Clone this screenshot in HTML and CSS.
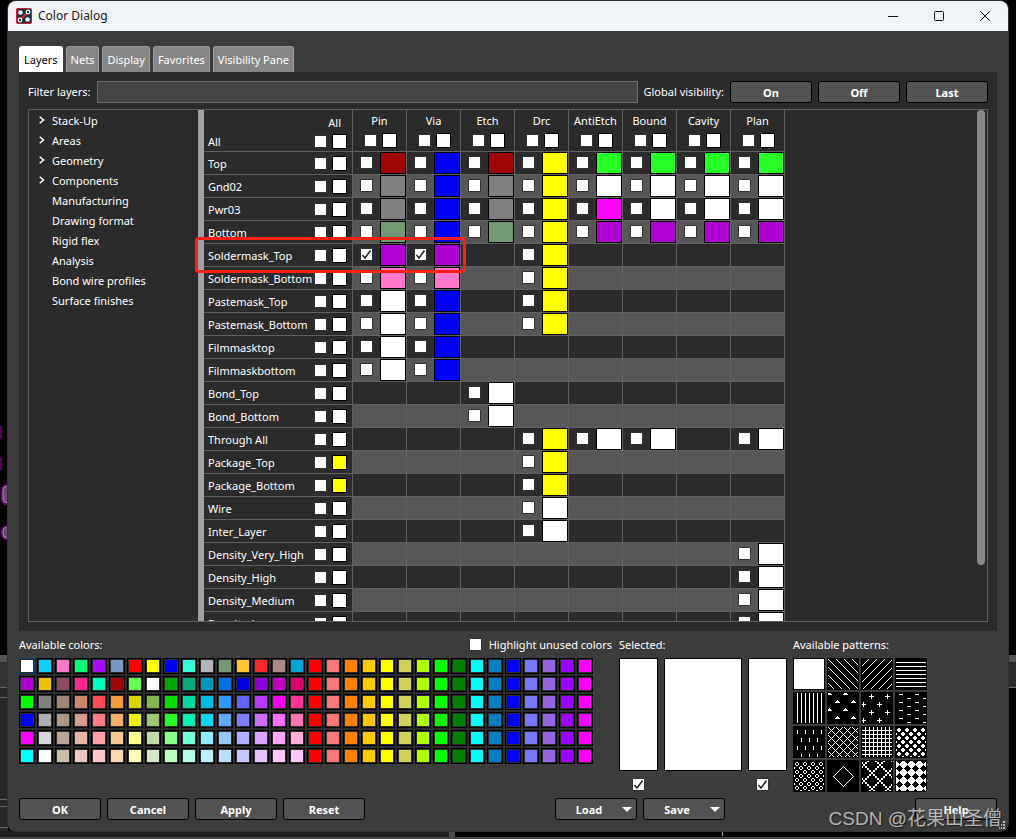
FILE: index.html
```html
<!DOCTYPE html>
<html lang="en">
<head>
    <meta charset="UTF-8">
    <meta name="viewport" content="width=device-width, initial-scale=1.0">
    <title>Color Dialog</title>
    <link rel="stylesheet" href="styles.css">
</head>
<body>
    <!-- parts of the application behind the dialog -->
    <svg class="backdrop backdrop-left" width="8" height="839" aria-hidden="true" shape-rendering="crispEdges">
        <path d="M0 426h2v13h-2zM0 457h2v13h-2z" fill="#5a0060"/>
        <g shape-rendering="auto" stroke="#a58aa8" fill="#6a4a6e">
            <rect x="2" y="485" width="14" height="19" rx="5" stroke="#5a0060" stroke-width="3"/>
            <rect x="3" y="486" width="14" height="17" rx="4"/>
            <rect x="2" y="526" width="14" height="13" rx="5" stroke="#5a0060" stroke-width="3"/>
            <rect x="3" y="527" width="14" height="11" rx="4"/>
        </g>
        <rect y="655" width="8" height="184" fill="#282828"/>
        <rect y="655" width="8" height="7" fill="#555"/>
        <rect y="662" width="8" height="25" fill="#333"/>
        <path d="M0 687.5h8M0 697.5h8M0 799.5h8M0 806.5h8M0 827.5h8" stroke="#666"/>
    </svg>
    <svg class="backdrop backdrop-right" width="8" height="839" aria-hidden="true" shape-rendering="crispEdges">
        <rect y="655" width="8" height="7" fill="#555"/>
        <rect y="662" width="8" height="25" fill="#2c2c2c"/>
        <path d="M0 687.5h8" stroke="#666"/>
    </svg>
    <svg class="backdrop backdrop-bottom" width="1016" height="8" aria-hidden="true" shape-rendering="crispEdges">
        <rect width="449" height="8" fill="#222"/>
        <rect x="449" width="6" height="8" fill="#4a4a4a"/>
        <rect x="685" width="199" height="1" fill="#2e8b57"/>
        <rect x="722" width="1" height="5" fill="#aaa"/>
        <rect y="6" width="1016" height="2" fill="#444"/>
    </svg>

    <main class="window">
        <header class="titlebar">
            <svg class="app-icon" width="16" height="16" viewBox="0 0 16 16" aria-hidden="true">
                <rect x="0.5" y="0.5" width="15" height="15" rx="1" fill="#12303a" stroke="#c8203c"/>
                <path d="M5 11l6-6" stroke="#d8203c" stroke-width="2"/>
                <path d="M1 1h2M1 3V1M15 13v2h-2" stroke="#d8203c"/>
                <circle cx="4.5" cy="4.5" r="2.3" fill="#fff"/>
                <circle cx="11.5" cy="11.5" r="2.3" fill="#fff"/>
                <circle cx="12" cy="4" r="1.8" fill="none" stroke="#fff" stroke-width="1.2"/>
                <circle cx="4" cy="12" r="1.8" fill="none" stroke="#fff" stroke-width="1.2"/>
            </svg>
            <h1>Color Dialog</h1>
            <div class="window-controls">
                <button type="button" aria-label="Minimize">
                    <svg width="12" height="12" viewBox="0 0 12 12"><path d="M1 6.5h10"/></svg>
                </button>
                <button type="button" aria-label="Maximize">
                    <svg width="12" height="12" viewBox="0 0 12 12"><rect x="1.5" y="1.5" width="9" height="9" rx="1"/></svg>
                </button>
                <button type="button" aria-label="Close">
                    <svg width="12" height="12" viewBox="0 0 12 12"><path d="M1 1l10 10M11 1L1 11"/></svg>
                </button>
            </div>
        </header>

        <div class="content">
            <div class="tabs" role="tablist">
                <button type="button" class="tab active" role="tab" aria-selected="true">Layers</button>
                <button type="button" class="tab" role="tab">Nets</button>
                <button type="button" class="tab" role="tab">Display</button>
                <button type="button" class="tab" role="tab">Favorites</button>
                <button type="button" class="tab" role="tab">Visibility Pane</button>
            </div>

            <section class="panel">
                <div class="filter-row">
                    <label for="filter">Filter layers:</label>
                    <input type="text" id="filter" class="filter-input">
                    <span>Global visibility:</span>
                    <div class="button-group">
                        <button type="button" class="btn">On</button>
                        <button type="button" class="btn">Off</button>
                        <button type="button" class="btn">Last</button>
                    </div>
                </div>

                <div class="split">
                    <ul class="tree">
                        <li class="parent">Stack-Up</li>
                        <li class="parent">Areas</li>
                        <li class="parent">Geometry</li>
                        <li class="parent">Components</li>
                        <li>Manufacturing</li>
                        <li>Drawing format</li>
                        <li>Rigid flex</li>
                        <li>Analysis</li>
                        <li>Bond wire profiles</li>
                        <li>Surface finishes</li>
                    </ul>
                    <div class="splitter"></div>
                    <div class="layers">
                        <table class="layer-table">
                            <colgroup id="cols"><col class="col-name"></colgroup>
                            <thead><tr id="head"></tr></thead>
                            <tbody id="rows"></tbody>
                        </table>
                    </div>
                    <div class="scrollbar"><div class="thumb"></div></div>
                    <div class="callout"></div>
                </div>
            </section>

            <div class="palette">
                <section class="colors">
                    <div class="palette-head">
                        <span>Available colors:</span>
                        <label class="check-label"><input type="checkbox" class="check"> Highlight unused colors</label>
                    </div>
                    <div class="color-grid" id="colors"></div>
                </section>
                <section class="selected">
                    <div class="palette-head">Selected:</div>
                    <div class="selected-boxes">
                        <div class="selected-col">
                            <div class="preview"></div>
                            <input type="checkbox" class="check" aria-label="Use selected color" checked>
                        </div>
                        <div class="preview preview-wide"></div>
                        <div class="selected-col selected-pattern">
                            <div class="preview"></div>
                            <input type="checkbox" class="check" aria-label="Use selected pattern" checked>
                        </div>
                    </div>
                </section>
                <section class="patterns">
                    <div class="palette-head">Available patterns:</div>
                    <div class="pattern-grid" id="patterns"></div>
                </section>
            </div>

            <footer class="actions">
                <div class="button-group">
                    <button type="button" class="btn">OK</button>
                    <button type="button" class="btn">Cancel</button>
                    <button type="button" class="btn">Apply</button>
                    <button type="button" class="btn">Reset</button>
                </div>
                <div class="button-group">
                    <button type="button" class="btn btn-menu"><span>Load</span><svg width="10" height="5" viewBox="0 0 10 5"><path d="M0 0h10L5 5z" fill="#fff"/></svg></button>
                    <button type="button" class="btn btn-menu"><span>Save</span><svg width="10" height="5" viewBox="0 0 10 5"><path d="M0 0h10L5 5z" fill="#fff"/></svg></button>
                </div>
                <button type="button" class="btn">Help</button>
            </footer>
        </div>

        <svg class="grip" width="6" height="8" viewBox="0 0 6 8" shape-rendering="crispEdges" aria-hidden="true">
            <path d="M4 0h2v2h-2zM2 3h1v2h-1zM4 3h2v2h-2zM0 6h1v2h-1zM2 6h1v2h-1zM4 6h2v2h-2z" fill="#bbb"/>
        </svg>
        <div class="watermark">CSDN @花果山圣僧</div>
    </main>

    <script src="script.js"></script>
</body>
</html>
```

FILE: styles.css
```css
* {
    box-sizing: border-box;
}

body {
    margin: 0;
    height: 100vh;
    padding: 1px 8px 8px;
    background-color: #000;
    color: #fff;
    font-family: "Noto Sans", "Open Sans", sans-serif;
    font-size: 11px;
    line-height: 16px;
    overflow: hidden;
}

button,
input {
    font: inherit;
    color: inherit;
    margin: 0;
}

.backdrop {
    position: absolute;
    top: 0;
}

.backdrop-left {
    left: 0;
}

.backdrop-right {
    right: 0;
}

.backdrop-bottom {
    top: auto;
    bottom: 0;
    left: 0;
}

.window {
    position: relative;
    display: flex;
    flex-direction: column;
    height: 100%;
    border-radius: 8px;
    background-color: #3c3c3c;
    box-shadow: 0 0 0 1px #333;
    overflow: hidden;
}

/* Title bar */
.titlebar {
    display: flex;
    align-items: center;
    height: 30px;
    padding-left: 8px;
    background-color: #f0f3f8;
    color: #1a1a1a;
}

.titlebar h1 {
    flex: 1;
    margin: 0 0 0 6px;
    font-size: 12px;
    font-weight: normal;
}

.window-controls {
    display: flex;
}

.window-controls button {
    display: flex;
    align-items: center;
    justify-content: center;
    width: 46px;
    height: 30px;
    padding: 0;
    border: none;
    background: none;
}

.window-controls svg {
    fill: none;
    stroke: #111;
}

.content {
    display: flex;
    flex: 1;
    flex-direction: column;
    min-height: 0;
    padding: 15px 11px 11px;
}

/* Tabs */
.tabs {
    display: flex;
    gap: 3px;
}

.tab {
    height: 26px;
    padding: 0 4px;
    border: 1px solid #999;
    border-bottom: none;
    border-radius: 3px 3px 0 0;
    background-color: #868686;
}

.tab.active {
    border-color: #fff;
    background-color: #fff;
    color: #000;
}

/* Layers panel */
.panel {
    display: flex;
    flex: 1;
    flex-direction: column;
    gap: 6px;
    min-height: 0;
    padding: 9px;
    background-color: #2b2b2b;
}

.filter-row {
    display: flex;
    align-items: center;
    gap: 6px;
}

.filter-input {
    flex: 1;
    height: 22px;
    border: 1px solid #6e6e6e;
    background-color: #454545;
}

.button-group {
    display: flex;
    gap: 6px;
}

.btn {
    width: 82px;
    height: 22px;
    padding: 1px 0 0;
    border: 1px solid #000;
    border-radius: 3px;
    background-color: #525252;
    font-weight: bold;
}

.btn-menu {
    display: flex;
    align-items: center;
    padding-right: 4px;
}

.btn-menu span {
    flex: 1;
}

.split {
    position: relative;
    display: flex;
    flex: 1;
    min-height: 0;
    border: 1px solid #5f5f5f;
}

.tree {
    width: 169px;
    margin: 0;
    padding: 1px 0 0 23px;
    list-style: none;
    line-height: 20px;
}

.parent {
    background: url("data:image/svg+xml,%3Csvg xmlns='http://www.w3.org/2000/svg' width='6' height='8' viewBox='0 0 6 8'%3E%3Cpath d='M.7 .8L4.500 4L.7 7.200' fill='none' stroke='%23fff' stroke-width='1.500'/%3E%3C/svg%3E") 10px 5px no-repeat;
    margin-left: -23px;
    padding-left: 23px;
}

.splitter {
    width: 6px;
    background-color: #a0a0a0;
}

.layers {
    flex: 1;
    overflow: hidden;
}

.layer-table {
    width: 581px;
    table-layout: fixed;
    border-collapse: separate;
    border-spacing: 0;
}

.col-name {
    width: 149px;
}

.layer-table th,
.layer-table td {
    padding: 0;
    border-right: 1px solid #606060;
    border-bottom: 1px solid #606060;
    font-weight: normal;
    text-align: left;
    vertical-align: top;
}

.layer-table tbody tr:nth-child(even) td {
    background-color: #575757;
}

.layer-name {
    display: flex;
    align-items: center;
    height: 22px;
    padding: 0 5px 0 4px;
}

.layer-name span {
    flex: 1;
    padding-top: 1px;
}

.layer-name .swatch,
.head-checks .swatch {
    margin-left: 5px;
}

.name-head {
    height: 41px;
    padding: 5px 5px 0 4px;
}

.name-head-title {
    padding-right: 6px;
    text-align: right;
}

.name-head .layer-name {
    height: 20px;
    padding: 0;
}

.col-head {
    height: 41px;
    padding-top: 3px;
    text-align: center;
}

.head-checks {
    display: flex;
    align-items: center;
    justify-content: center;
    margin-top: 4px;
    padding-left: 2px;
}

.cell {
    display: flex;
    height: 22px;
    padding-left: 7px;
}

.cell .check {
    margin: 4px 7px 0 0;
}

.check {
    display: block;
    flex: none;
    width: 13px;
    height: 13px;
    border: 1px solid #303030;
    border-radius: 1px;
    appearance: none;
    background-color: #fff;
}

.check:checked {
    background-image: url("data:image/svg+xml,%3Csvg xmlns='http://www.w3.org/2000/svg' viewBox='0 0 11 11'%3E%3Cpath d='M1.5 6l2.5 3L9.500 1.500' fill='none' stroke='%23222' stroke-width='1.500'/%3E%3C/svg%3E");
}

.swatch {
    flex: none;
    width: 15px;
    height: 15px;
    padding: 0;
    border: 1px solid #000;
    background-color: #fff;
}

.cell .swatch {
    width: 26px;
    height: 22px;
}

.scrollbar {
    width: 10px;
}

.thumb {
    width: 8px;
    height: 89%;
    border-radius: 4px;
    background-color: #888;
}

/* red frame round the soldermask row */
.callout {
    position: absolute;
    top: 127px;
    left: 166px;
    width: 271px;
    height: 36px;
    border: 3px solid #ff2015;
    border-radius: 4px;
}

/* Palette */
.palette {
    display: flex;
}

.colors {
    width: 593px;
    margin-right: 7px;
}

.selected {
    margin-right: 6px;
}

.palette-head {
    display: flex;
    align-items: center;
    justify-content: space-between;
    height: 27px;
}

.check-label {
    display: flex;
    align-items: center;
    gap: 7px;
}

.color-grid {
    display: grid;
    grid-template-columns: repeat(32, 16px);
    gap: 2px;
    width: 574px;
    background-color: #2b2b2b;
}

.color {
    display: flex;
    width: 16px;
    height: 16px;
    padding: 1px;
    border: 1px solid #000;
    background-color: #2b2b2b;
}

.color span {
    flex: 1;
    align-self: stretch;
}

.color:first-child {
    border-color: #0d3f75;
}

.selected-boxes {
    display: flex;
    gap: 6px;
}

.selected-col {
    display: flex;
    flex-direction: column;
    align-items: center;
    gap: 7px;
}

.selected-pattern {
    align-items: flex-start;
}

.selected-pattern .check {
    margin-left: 8px;
}

.preview {
    width: 39px;
    height: 113px;
    border: 1px solid #000;
    background-color: #fff;
}

.preview-wide {
    width: 78px;
}

.pattern-grid {
    display: grid;
    grid-template-columns: repeat(4, 32px);
    gap: 2px;
}

.pattern {
    width: 32px;
    height: 32px;
    padding: 0;
    border: none;
    background-color: #000;
}

.pattern svg {
    display: block;
}

.actions {
    display: flex;
    justify-content: space-between;
    margin-top: 6px;
}

.grip {
    position: absolute;
    right: 3px;
    bottom: 2px;
}

.watermark {
    position: absolute;
    right: 6px;
    bottom: 0;
    color: rgba(205, 205, 205, 0.85);
    font-family: "Liberation Sans", "Noto Sans CJK SC", sans-serif;
    font-size: 19px;
    line-height: 24px;
    text-shadow: 1px 1px 1px rgba(0, 0, 0, 0.5);
}
```

FILE: script.js
```javascript
const columns = ['Pin', 'Via', 'Etch', 'Drc', 'AntiEtch', 'Bound', 'Cavity', 'Plan'];

const W = '#ffffff', Y = '#ffff00', B = '#0000ff', R = '#a00505', G = '#808080';
const L = '#28ff28', P = '#ae00d0', S = '#749774', K = '#ff77c8', M = '#ff00ff';

// name, one color per column (0 = no cell)
const layers = [
    ['Top', [R, B, R, Y, L, L, L, L]],
    ['Gnd02', [G, B, G, Y, W, W, W, W]],
    ['Pwr03', [G, B, G, Y, M, W, W, W]],
    ['Bottom', [S, B, S, Y, P, P, P, P]],
    ['Soldermask_Top', [P, P, 0, Y, 0, 0, 0, 0]],
    ['Soldermask_Bottom', [K, K, 0, Y, 0, 0, 0, 0]],
    ['Pastemask_Top', [W, B, 0, Y, 0, 0, 0, 0]],
    ['Pastemask_Bottom', [W, B, 0, Y, 0, 0, 0, 0]],
    ['Filmmasktop', [W, B, 0, 0, 0, 0, 0, 0]],
    ['Filmmaskbottom', [W, B, 0, 0, 0, 0, 0, 0]],
    ['Bond_Top', [0, 0, W, 0, 0, 0, 0, 0]],
    ['Bond_Bottom', [0, 0, W, 0, 0, 0, 0, 0]],
    ['Through All', [0, 0, 0, Y, W, W, 0, W]],
    ['Package_Top', [0, 0, 0, Y, 0, 0, 0, 0], Y],
    ['Package_Bottom', [0, 0, 0, Y, 0, 0, 0, 0], Y],
    ['Wire', [0, 0, 0, W, 0, 0, 0, 0]],
    ['Inter_Layer', [0, 0, 0, W, 0, 0, 0, 0]],
    ['Density_Very_High', [0, 0, 0, 0, 0, 0, 0, W]],
    ['Density_High', [0, 0, 0, 0, 0, 0, 0, W]],
    ['Density_Medium', [0, 0, 0, 0, 0, 0, 0, W]],
    ['Density_Low', [0, 0, 0, 0, 0, 0, 0, W]]
];

function check(label, on) {
    return `<input type="checkbox" class="check" aria-label="${label}"${on ? ' checked' : ''}>`;
}

function swatch(label, color) {
    return `<button type="button" class="swatch" aria-label="${label} color" style="background-color: ${color}"></button>`;
}

document.getElementById('cols').innerHTML += columns.map(() => '<col>').join('');

document.getElementById('head').innerHTML =
    `<th><div class="name-head"><div class="name-head-title">All</div>
        <div class="layer-name"><span>All</span>${check('All layers')}${swatch('All layers', W)}</div></div></th>` +
    columns.map(c => `<th><div class="col-head">${c}<div class="head-checks">${check(c)}${swatch(c, W)}</div></div></th>`).join('');

document.getElementById('rows').innerHTML = layers.map(([name, cells, color]) =>
    `<tr><th><div class="layer-name"><span>${name}</span>${check(name)}${swatch(name, color || W)}</div></th>` +
    cells.map((c, i) => {
        if (!c) return '<td></td>';
        const label = name + ' ' + columns[i];
        return `<td><div class="cell">${check(label, name === 'Soldermask_Top' && i < 2)}${swatch(label, c)}</div></td>`;
    }).join('') + '</tr>'
).join('');

// Palette: 16 own colors per row, then the same 16 on every row
const palette = [
    'ffffff 10ceff ff77c8 00ff74 a60cff 7797c5 ff0000 ffff00 0000ff 38f9d7 b4b3ba 749774 ffc632 ff2828 ad8888 00a5d8',
    'ae00d0 ebc000 914a66 ff2a91 00ffbd a00505 66ff52 ffffff 00a600 00ab7c 0095ba 0070e0 0000e0 8c00d6 be00be da006e',
    '00ff00 808080 a08672 cc866b ff4b58 f29b3f d8d600 82b54b 00e000 00d89c 00beeb 3297ff 6464ff ba38ff f000f0 ff3296',
    '0000ff adadad ab9685 d8a08c ff7882 f5b06b f0f000 9fc777 23ff23 00f5b2 10d6ff 62adff 8080ff cc6cff ff6cff ff76b8',
    'ff00ff d8d8d8 baa698 e8b4a6 ffa0a8 f8c692 ffff8a c0d9a8 88ff88 74ffd8 90ecff 96c8ff b0b0ff dca2ff ffa6ff ffaed6',
    '00ffff ffffff cbbdaa edc6be ffc4c8 fbd6b4 ffffb8 d4e6c2 bcffbc b0ffe6 baf0ff bedeff c6c6ff e6c0ff ffc8ff ffc6fa'
];
const common = 'ff0000 ff7878 ff8000 ffc800 ffff00 d0d05a b0ff00 00ff00 008000 00ffff 0080c0 0000ff 7878ff 9664e0 9c00ff ff00ff';

document.getElementById('colors').innerHTML = palette.map(row =>
    (row + ' ' + common).split(' ').map(c =>
        `<button type="button" class="color" aria-label="#${c}"><span style="background-color: #${c}"></span></button>`
    ).join('')
).join('');

// Patterns
function repeat(from, to, step, draw) {
    let out = '';
    for (let i = from; i <= to; i += step) out += draw(i);
    return out;
}

// calls draw(x, y) on two interleaved lattices
function lattice(x0, y0, dx, dy, draw) {
    let out = '';
    for (let row = 0, y = y0; y < 34; y += dy, row++) {
        for (let x = x0 + (row % 2 ? dx / 2 : 0) - dx; x < 36; x += dx) out += draw(x, y);
    }
    return out;
}

const solid = (d, color = '#fff') => `<path d="${d}" fill="${color}"/>`;
// square dots along a diagonal, dir 1 is down-right and -1 is down-left
const diagonal = (start, dir, size = 1) =>
    repeat(0, 31, size, i => `M${start + dir * i} ${i}h${size}v${size}h-${size}z`);

const down = repeat(-24, 24, 8, x => diagonal(x, 1));
const up = repeat(8, 56, 8, x => diagonal(x, -1));
const across = repeat(4, 28, 4, y => `M0 ${y}h32v1h-32z`);
const upright = repeat(4, 28, 4, x => `M${x} 0h1v32h-1z`);
const background = 'M0 0h32v32h-32z';

const patterns = [
    solid(background),
    solid(down),
    solid(up),
    solid(across),
    solid(upright),
    solid(lattice(2, 0, 16, 8, (x, y) => `M${x} ${y}h1v1h1v1h1v1h-5v-1h1v-1h1z`)),
    solid(lattice(10, 4, 16, 8, (x, y) => `M${x - 2} ${y}h5v1h-5zM${x} ${y - 2}h1v5h-1z`)),
    solid(lattice(4, 2, 16, 4, (x, y) => `M${x} ${y}h4v1h-4z`)),
    solid(lattice(4, 4, 8, 8, (x, y) => `M${x} ${y}h1v4h-1z`)),
    solid(down) + solid(up),
    solid(across) + solid(upright),
    solid(lattice(4, 4, 8, 4, (x, y) => `M${x - 1} ${y - 2}h2v1h1v2h-1v1h-2v-1h-1v-2h1z`)),
    solid(lattice(4, 4, 8, 4, (x, y) => `M${x - 1} ${y - 2}h2v1h-2zM${x - 1} ${y + 1}h2v1h-2zM${x - 2} ${y - 1}h1v2h-1zM${x + 1} ${y - 1}h1v2h-1z`)),
    solid(repeat(0, 10, 1, i => [[16 + i, 6 + i], [16 - i, 6 + i], [16 + i, 26 - i], [16 - i, 26 - i]]
        .map(([x, y]) => `M${x} ${y}h1v1h-1z`).join(''))),
    solid(repeat(-34, 30, 16, x => diagonal(x, 1, 2))) + solid(repeat(6, 54, 16, x => diagonal(x, -1, 2))),
    solid(background) + solid(repeat(0, 32, 8, y => repeat(4, 28, 8, x =>
        `M${x} ${y - 3}h1v1h1v1h1v1h1v1h-1v1h-1v1h-1v1h-1v-1h-1v-1h-1v-1h-1v-1h1v-1h1v-1h1z`)), '#000')
];

document.getElementById('patterns').innerHTML = patterns.map((p, i) =>
    `<button type="button" class="pattern" aria-label="Pattern ${i + 1}">
        <svg width="32" height="32" viewBox="0 0 32 32" shape-rendering="crispEdges">${p}<rect x="0.500" y="0.500" width="31" height="31" fill="none" stroke="#000"/></svg>
    </button>`
).join('');
```
